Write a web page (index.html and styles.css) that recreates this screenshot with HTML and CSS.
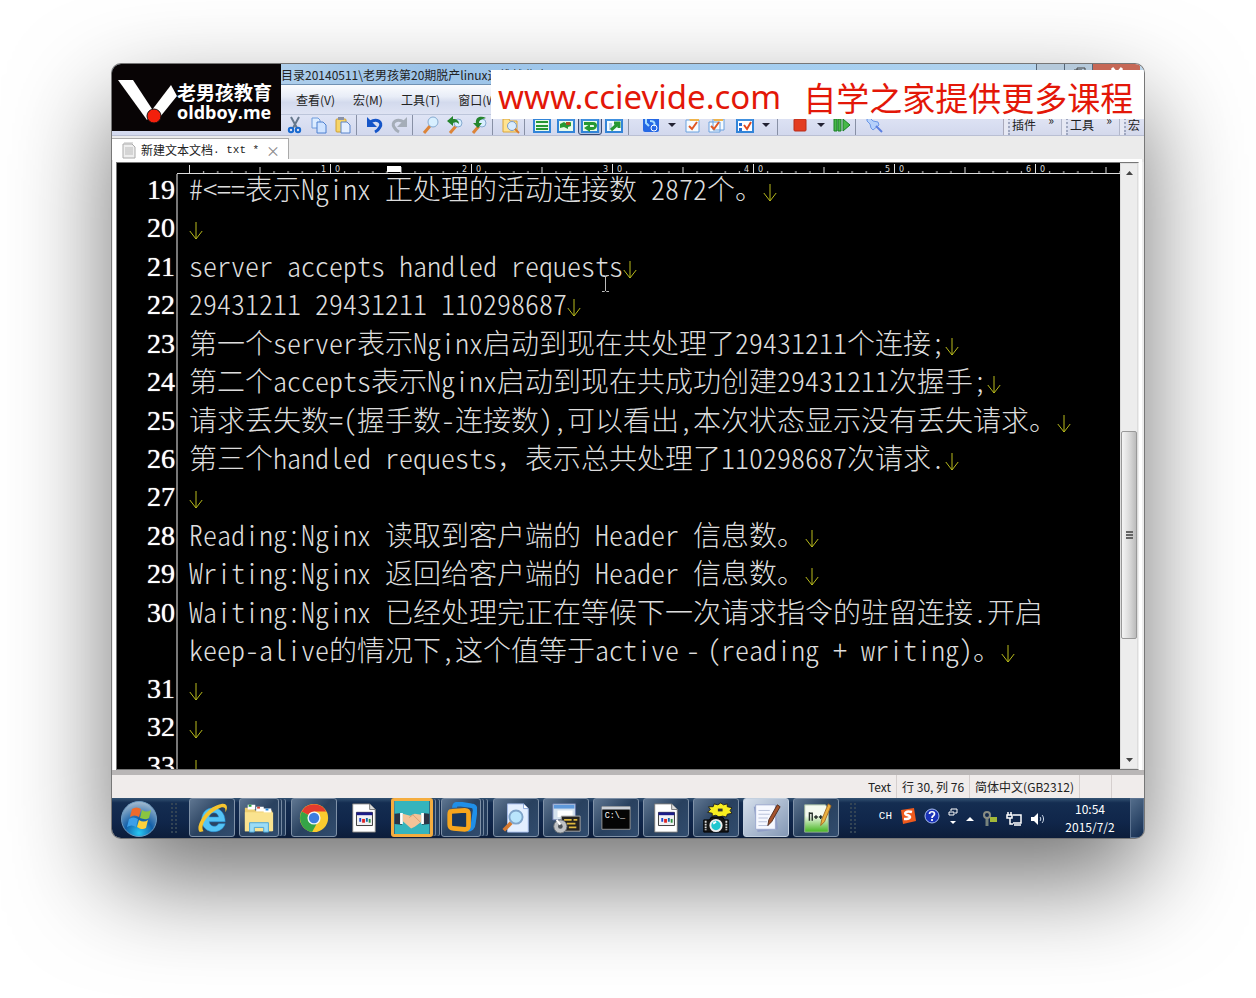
FILE: index.html
```html
<!DOCTYPE html>
<html lang="zh-CN">
<head>
<meta charset="utf-8">
<title>新建文本文档.txt</title>
<meta name="viewport" content="width=device-width, initial-scale=1">
<link rel="stylesheet" href="styles.css">
</head>
<body>
<main class="desktop">
  <header class="titlebar"><h1 class="title">目录20140511\老男孩第20期脱产linux运维就业班</h1>
    <div class="winbuttons"><button class="wb" aria-label="最小化"></button><button class="wb" aria-label="还原"><svg width="14" height="10" viewBox="0 0 14 10"><path d="M2 9V4h8v5M5 4V2h8v6" fill="none" stroke="#444"/></svg></button><button class="wb close" aria-label="关闭"><svg width="14" height="10" viewBox="0 0 14 10"><path d="M2 2l5 6 5-6" fill="none" stroke="#fff" stroke-width="3"/></svg></button></div>
  </header>
  <nav class="menubar"><button>查看(V)</button><button>宏(M)</button><button>工具(T)</button><button>窗口(W)</button></nav>
  <div class="toolbar">
    <div class="tools">
      <button class="tool" aria-label="剪切"><svg viewBox="0 0 18 18"><path d="M5 1l6 11M13 1L7 12" stroke="#66788c" stroke-width="2"/><circle cx="5" cy="14" r="2.2" fill="none" stroke="#1769cf" stroke-width="2"/><circle cx="12" cy="14" r="2.2" fill="none" stroke="#1769cf" stroke-width="2"/></svg></button>
      <button class="tool" aria-label="复制"><svg viewBox="0 0 18 18"><path d="M2 2h6l2 2v8H2z" fill="#dcecff" stroke="#6e9bdc"/><path d="M7 6h6l3 3v8H7z" fill="#cfe3ff" stroke="#4d80d0"/></svg></button>
      <button class="tool" aria-label="粘贴"><svg viewBox="0 0 18 18"><rect x="2" y="3" width="10" height="13" rx="1" fill="#f6d568" stroke="#d0a030"/><rect x="4" y="1" width="6" height="3" fill="#8b93a8"/><path d="M7 6h6l3 3v8H7z" fill="#e4efff" stroke="#5b85cc"/></svg></button>
      <i class="sep"></i>
      <button class="tool" aria-label="撤销"><svg viewBox="0 0 18 18"><path d="M4 6c7-4 13 0 10 5-1 2-3 4-5 5" fill="none" stroke="#1555c8" stroke-width="3"/><path d="M1 1v10h10z" fill="#1555c8"/></svg></button>
      <button class="tool" aria-label="重做"><svg viewBox="0 0 18 18"><path d="M14 6C7 2 1 6 4 11c1 2 3 4 5 5" fill="none" stroke="#a5adb8" stroke-width="3"/><path d="M17 1v10H7z" fill="#a5adb8"/></svg></button>
      <i class="sep"></i>
      <button class="tool" aria-label="查找"><svg viewBox="0 0 18 18"><path d="M8 10l-6 7" stroke="#dc8438" stroke-width="3"/><circle cx="11" cy="6" r="5" fill="#d8efff" stroke="#86aad0"/></svg></button>
      <button class="tool" aria-label="查找上一个"><svg viewBox="0 0 18 18"><path d="M10 10l-6 7" stroke="#dc8438" stroke-width="3"/><circle cx="12" cy="7" r="4" fill="#d8efff" stroke="#86aad0"/><path d="M1 5l6-5v3c4 0 6 2 6 5-2-2-4-2-6-1v3z" fill="#25852e"/></svg></button>
      <button class="tool" aria-label="查找下一个"><svg viewBox="0 0 18 18"><path d="M9 10l-6 7" stroke="#dc8438" stroke-width="3"/><circle cx="12" cy="7" r="4" fill="#d8efff" stroke="#86aad0"/><path d="M16 2C10-1 5 2 6 7H3l5 5 4-5H9c0-3 3-4 7-5z" fill="#25852e"/></svg></button>
      <i class="sep"></i>
      <button class="tool" aria-label="文件中查找"><svg viewBox="0 0 18 18"><path d="M1 3h6l1 2h7v11H1z" fill="#ffe391" stroke="#dba539"/><circle cx="10" cy="10" r="4.5" fill="#d8ecff" stroke="#7b9dc8"/><path d="M13 13l4 4" stroke="#d87b30" stroke-width="2"/></svg></button>
      <i class="sep tight"></i>
      <button class="tool" aria-label="不换行"><svg viewBox="0 0 18 18"><path d="M1 3h16v13H1z" fill="#e9fbe9" stroke="#3284d8" stroke-width="2"/><path d="M3 6h12M3 10h12M3 13h12" stroke="#269832" stroke-width="2"/></svg></button>
      <button class="tool" aria-label="按列换行"><svg viewBox="0 0 18 18"><path d="M1 3h16v13H1z" fill="#e9fbe9" stroke="#3284d8" stroke-width="2"/><path d="M1 2h16v3H1z" fill="#4090df"/><path d="M3 8l4-2 3 2 4-2v4l-3 1v2l-4-2-4 1z" fill="#269832"/><path d="M9 6h4v3H9z" fill="#a75024"/></svg></button>
      <button class="tool pressed" aria-label="按窗口换行"><svg viewBox="0 0 18 18"><path d="M1 3h16v13H1z" fill="#e9fbe9" stroke="#3284d8" stroke-width="2"/><path d="M1 2h16v3H1z" fill="#4090df"/><path d="M3 6h9c6 0 5 8-1 8H9v2l-6-4 6-4v3h3c2 0 1-2 0-2H3z" fill="#269832"/></svg></button>
      <button class="tool" aria-label="放大窗口"><svg viewBox="0 0 18 18"><path d="M1 3h16v13H1z" fill="#f2fbff" stroke="#3284d8" stroke-width="2"/><path d="M1 2h16v3H1z" fill="#4090df"/><path d="M4 7h3v7H4z" fill="#b9d3ea"/><path d="M6 14L14 7m-5 0h5v5" stroke="#269832" stroke-width="3" fill="none"/></svg></button>
      <i class="sep wide"></i>
      <button class="tool" aria-label="配置"><svg viewBox="0 0 18 18"><rect x="1" y="1" width="16" height="15" rx="2" fill="#2568e4"/><path d="M4 2v5l3 3M8 5c5 0 5 3 4 5" stroke="#a5dcff" stroke-width="2" fill="none"/><circle cx="12" cy="12" r="3" fill="none" stroke="#fff"/></svg></button>
      <button class="drop" aria-label="更多配置"></button>
      <button class="tool" aria-label="属性"><svg viewBox="0 0 18 18"><path d="M2 4h13v12H2z" fill="#f6fbff" stroke="#6ba1de"/><path d="M5 2l10-1v4H6z" fill="#efb44c"/><path d="M5 10l3 3 5-7" stroke="#e05724" stroke-width="2" fill="none"/></svg></button>
      <button class="tool" aria-label="全部属性"><svg viewBox="0 0 18 18"><path d="M5 3h11v11H5zM1 6h11v10H1z" fill="#f6fbff" stroke="#6ba1de"/><path d="M5 2l10-1v4H6z" fill="#efb44c"/><path d="M3 10l3 3 5-7" stroke="#e05724" stroke-width="2" fill="none"/></svg></button>
      <button class="tool options" aria-label="选项"><svg viewBox="0 0 18 18"><path d="M1 3h16v13H1z" fill="#fff" stroke="#3284d8" stroke-width="2"/><path d="M1 2h16v3H1z" fill="#4090df"/><path d="M3 7h3v3H3zM3 12h3v3H3z" fill="#246ed2"/><path d="M8 9l3 4 4-7" stroke="#e04a20" stroke-width="2" fill="none"/></svg></button>
      <button class="drop" aria-label="更多选项"></button>
      <i class="sep wide"></i>
      <button class="tool" aria-label="停止录制"><svg viewBox="0 0 18 18"><rect x="3" y="3" width="12" height="12" rx="1" fill="#e33d22" stroke="#b82c18"/></svg></button>
      <button class="drop" aria-label="更多录制"></button>
      <button class="tool" aria-label="运行宏"><svg viewBox="0 0 18 18"><path d="M1 3h3v12H1zM5 3h3v12H5zM10 3l7 6-7 6z" fill="#48b848" stroke="#188024"/></svg></button>
      <i class="sep"></i>
      <button class="tool" aria-label="固定"><svg viewBox="0 0 18 18"><path d="M2 3l3-1 3 3 5 1 1 3-6 5-2-2-1-4-3-3z" fill="#b5d0fa" stroke="#6b97e6"/><path d="M11 10l6 6" stroke="#5b7fe0" stroke-width="2"/></svg></button>
    </div>
    <div class="band"><button>插件</button><span>»</span></div>
    <div class="band"><button>工具</button><span>»</span></div>
    <div class="band last"><button>宏</button></div>
  </div>
  <div class="tabs"><div class="tab"><svg class="tabicon" viewBox="0 0 14 18" width="14" height="18"><path d="M1 3h9l3 3v11H1z" fill="#eee" stroke="#aaa"/><path d="M2 2h9M3 7h8M3 9h8M3 11h8M3 13h8" stroke="#bbb"/></svg><span>新建文本文档</span><span class="ext">. txt *</span><button aria-label="关闭标签">×</button></div></div>

  <section class="editor">
    <div class="sheet">
      <svg class="ruler" height="11" aria-hidden="true">
        <defs><pattern id="ticks" x="72" y="0" width="70.5" height="11" patternUnits="userSpaceOnUse"><path d="M.5 4v7M14.6 8v3M28.7 8v3M42.8 8v3M56.9 8v3" stroke="#ddd"/></pattern></defs>
        <rect x="72" width="100%" height="11" fill="url(#ticks)"/>
        <path d="M60 10.5h1200" stroke="#ddd"/>
        <path d="M72.5 2v9M213.5 1v10M354.5 1v10M495.5 1v10M636.5 1v10M777.5 1v10M918.5 1v10" stroke="#ddd"/>
        <path d="M270 3h14v6H270z" fill="#fff"/>
        <g class="marks"><text x="204" y="9">1</text><text x="218" y="9">0</text><text x="345" y="9">2</text><text x="359" y="9">0</text><text x="486" y="9">3</text><text x="500" y="9">0</text><text x="627" y="9">4</text><text x="641" y="9">0</text><text x="768" y="9">5</text><text x="782" y="9">0</text><text x="909" y="9">6</text><text x="923" y="9">0</text></g>
      </svg>
      <div class="view">
        <svg class="ibeam" width="9" height="17" viewBox="0 0 9 17"><path d="M1 .5h2.500l1 1 1-1H8M4.500 1v15M1 16.500h2.500l1-1 1 1H8" stroke="#bbb" fill="none"/></svg>
        <ol class="lines">
          <li><b>19</b><p>#&lt;==表示Nginx 正处理的活动连接数 2872个。<svg class="eol"><use href="#down"/></svg></p></li>
          <li><b>20</b><p><svg class="eol"><use href="#down"/></svg></p></li>
          <li><b>21</b><p>server accepts handled requests<svg class="eol"><use href="#down"/></svg></p></li>
          <li><b>22</b><p>29431211 29431211 110298687<svg class="eol"><use href="#down"/></svg></p></li>
          <li><b>23</b><p>第一个server表示Nginx启动到现在共处理了29431211个连接;<svg class="eol"><use href="#down"/></svg></p></li>
          <li><b>24</b><p>第二个accepts表示Nginx启动到现在共成功创建29431211次握手;<svg class="eol"><use href="#down"/></svg></p></li>
          <li><b>25</b><p>请求丢失数=(握手数-连接数),可以看出,本次状态显示没有丢失请求。<svg class="eol"><use href="#down"/></svg></p></li>
          <li><b>26</b><p>第三个handled requests<span class="full">，</span>表示总共处理了110298687次请求.<svg class="eol"><use href="#down"/></svg></p></li>
          <li><b>27</b><p><svg class="eol"><use href="#down"/></svg></p></li>
          <li><b>28</b><p>Reading:Nginx 读取到客户端的 Header 信息数。<svg class="eol"><use href="#down"/></svg></p></li>
          <li><b>29</b><p>Writing:Nginx 返回给客户端的 Header 信息数。<svg class="eol"><use href="#down"/></svg></p></li>
          <li><b>30</b><p>Waiting:Nginx 已经处理完正在等候下一次请求指令的驻留连接.开启<br>keep-alive的情况下,这个值等于active<span class="dash">-</span>(reading + writing)。<svg class="eol"><use href="#down"/></svg></p></li>
          <li><b>31</b><p><svg class="eol"><use href="#down"/></svg></p></li>
          <li><b>32</b><p><svg class="eol"><use href="#down"/></svg></p></li>
          <li><b>33</b><p><svg class="eol"><use href="#down"/></svg></p></li>
        </ol>
      </div>
    </div>
    <div class="scroll"><button aria-label="向上滚动"><svg width="7" height="4"><path d="M0 4l3.500-4L7 4z" fill="#444"/></svg></button><div class="track"><div class="thumb"><i></i><i></i><i></i></div></div><button aria-label="向下滚动"><svg width="7" height="4"><path d="M0 0h7L3.500 4z" fill="#444"/></svg></button></div>
  </section>

  <footer class="status"><span>Text</span><span>行 30, 列 76</span><span>简体中文(GB2312)</span><span class="cell"></span><span class="cell end"></span></footer>

  <div class="taskbar">
    <button class="start" aria-label="开始"><svg width="38" height="38" viewBox="0 0 38 38"><defs><radialGradient id="orb" cx=".5" cy=".9" r=".9"><stop offset="0" stop-color="#27c8f4"/><stop offset=".45" stop-color="#135fa8"/><stop offset="1" stop-color="#a8bdd0"/></radialGradient></defs><circle cx="19" cy="20" r="17.500" fill="url(#orb)" stroke="#6f9cc2"/><path d="M12 10c3-2 6-2 9 0l-2 8c-3-2-6-2-9 0z" fill="#ee6a2c"/><path d="M22 11c3 2 6 2 9 0l-2 8c-3 2-6 1-9 0z" fill="#8bc53f"/><path d="M9 20c3-2 6-2 9 0l-2 8c-3-2-6-2-9 0z" fill="#3c9fe8"/><path d="M19 21c3 2 6 2 9 0l-2 8c-3 2-6 1-9-1z" fill="#fbd13c"/></svg></button>
    <i class="grip"></i>
    <div class="apps">
      <button class="app" aria-label="Internet Explorer"><svg viewBox="0 0 34 34"><path d="M31 21H14c1 6 8 6 10 2h7C27 36 6 34 6 19 6 2 31 1 31 21zM14 16h10c-1-6-9-6-10 0z" fill="#55c4f5" stroke="#238fd6" stroke-width=".6"/><path d="M4 32C-2 26 12 4 27 2c7-1 7 5 4 9 1-5-1-6-5-5C15 10 3 24 8 31z" fill="#f6c42e"/></svg></button>
      <button class="app narrow stack" aria-label="资源管理器"><svg viewBox="0 0 34 34"><path d="M2 6h9l2 3h18v22H2z" fill="#eccd70"/><path d="M5 3h8v5H5zM14 5h8v5h-8zM22 7h8v5h-8z" fill="#fff"/><path d="M6 3h3v2H6z" fill="#28a33b"/><path d="M15 5h3v2h-3z" fill="#d43"/><path d="M24 7h3v2h-3z" fill="#28d"/><path d="M2 11h30v20H2z" fill="#fae38f"/><path d="M7 32V22h20v10h-5v-5H12v5z" fill="#9bdcf6" stroke="#4aa4d5"/></svg></button>
      <button class="app" aria-label="Chrome"><svg viewBox="0 0 34 34"><circle cx="17" cy="17" r="15" fill="#fbcb2e"/><path d="M17 17L4 10A15 15 0 0 1 30 10H17z" fill="#e33b2e"/><path d="M17 17L4 10A15 15 0 0 0 15 32l6-11z" fill="#35a447"/><circle cx="17" cy="17" r="7" fill="#f4f7fb"/><circle cx="17" cy="17" r="5.500" fill="#3b7de0"/></svg></button>
      <button class="app plain" aria-label="文档程序"><svg viewBox="0 0 34 34"><use href="#docapp"/></svg></button>
      <button class="app narrow hot stack" aria-label="远程协助"><svg viewBox="0 0 38 36"><path d="M0 0h38v36H0z" fill="#35b4bd"/><path d="M0 14l8-1v13l-8-1zM38 14l-8-1v13l8-1z" fill="#2c3446"/><path d="M6 13h3v12H6zM29 13h3v12h-3z" fill="#fff"/><path d="M9 14l8 2 5-2 7 1v8l-7 5-4 2-9-8z" fill="#f3c398"/><path d="M16 18l4-3 8 8" stroke="#d69b6e" fill="none"/></svg></button>
      <button class="app narrow stack" aria-label="VMware"><svg viewBox="0 0 34 34"><path d="M10 6c0-3 2-4 5-4l13 2c3 0 4 2 4 5l-2 14c0 4-3 6-6 6" fill="none" stroke="#1f8fe8" stroke-width="5"/><path d="M7 10l14-1c3 0 4 1 4 4v12c0 3-1 4-4 4l-12-1c-3 0-4-1-4-4V13c0-2 0-3 2-3z" fill="#19365c" stroke="#f7a51d" stroke-width="5"/></svg></button>
      <button class="app" aria-label="搜索"><svg viewBox="0 0 34 34"><path d="M8 2h17l5 5v25H8z" fill="#e3efff" stroke="#a3bae8"/><path d="M25 2v5h5" fill="#fff" stroke="#8aa6db"/><path d="M12 22l-8 8" stroke="#d67a30" stroke-width="4"/><circle cx="17" cy="16" r="7" fill="#b9e5fc" stroke="#7fa4c9" stroke-width="2"/></svg></button>
      <button class="app" aria-label="安装程序"><svg viewBox="0 0 34 34"><path d="M3 2h24v17H3z" fill="#d5e2ee" stroke="#67a"/><path d="M4 3h22v4H4z" fill="#5e99db"/><path d="M8 9h16v7H8z" fill="#fff"/><path d="M12 15h20v16H12z" fill="#25221e" stroke="#aaa"/><path d="M15 19h8m2 0h4M18 23h9M20 27h8" stroke="#e0b93e" stroke-width="2"/><circle cx="11" cy="26" r="7" fill="#bfc2c5" stroke="#6b7176"/><circle cx="11" cy="26" r="2.500" fill="#4d5358"/><path d="M7 19l4 5" stroke="#fff" stroke-width="2"/></svg></button>
      <button class="app" aria-label="命令提示符"><svg viewBox="0 0 34 34"><path d="M2 5h30v24H2z" fill="#050505" stroke="#999"/><path d="M2 5h30v3H2z" fill="#ccd1d8"/><text x="5" y="17" class="cmd">C:\_</text></svg></button>
      <button class="app" aria-label="文档程序 2"><svg viewBox="0 0 34 34"><use href="#docapp"/></svg></button>
      <button class="app" aria-label="截图工具"><svg viewBox="0 0 34 34"><path d="M9 5l5 0 1-3 4 1 3-2 3 2 4-1 0 3 5 1-2 3 2 3-5 1-1 3-4-1-4 1-3-2-4 1 0-3-5-1 3-3z" fill="#f8ee20" stroke="#222"/><path d="M19 7h5v3h-5z" fill="#333"/><path d="M4 19h6l2-3h12l2 3h4v13H4z" fill="#151515" stroke="#000"/><path d="M6 20v10M28 20v10" stroke="#ddd" stroke-width="2" stroke-dasharray="2 1"/><circle cx="17" cy="25" r="6" fill="#20c7cf" stroke="#eee" stroke-width="2"/><path d="M14 23l3-2" stroke="#fff" stroke-width="2"/></svg></button>
      <button class="app active" aria-label="EditPlus"><svg viewBox="0 0 34 34"><path d="M4 5l22-2 4 26-22 3z" fill="#8f9dc5"/><path d="M6 3h21v26H6z" fill="#f6f8ff" stroke="#9aa7cd"/><path d="M9 9h12M9 13h12M9 17h10M9 21h9M9 25h11" stroke="#b5bfd9"/><path d="M29 3l3 2-9 16-4 4 1-6z" fill="#a6532c" stroke="#502b1b"/></svg></button>
      <button class="app" aria-label="Notepad++"><svg viewBox="0 0 34 34"><defs><linearGradient id="green" x2="0" y2="1"><stop offset=".4" stop-color="#f4faef"/><stop offset="1" stop-color="#44b51e"/></linearGradient></defs><path d="M5 3h22l3 4v25H5z" fill="url(#green)" stroke="#9cb49a"/><path d="M10 11v9m0-8h3v8M15 16h4m-2-2v4M20 16h4m-2-2v4" stroke="#25302a" stroke-width="1.500" fill="none"/><path d="M30 2l3 2-7 17-4 4 1-6z" fill="#ecb13f" stroke="#a36c25"/></svg></button>
    </div>
    <i class="grip"></i>
    <div class="tray">
      <span class="ch">CH</span>
      <svg width="16" height="16" viewBox="0 0 16 16"><path d="M1 2l13-2 2 13-13 3z" fill="#ee5a1d"/><path d="M12 4C6 2 3 6 7 7s5 4-3 4" stroke="#fff" stroke-width="2.500" fill="none"/></svg>
      <svg width="16" height="16" viewBox="0 0 16 16"><circle cx="8" cy="8" r="7" fill="#1a32b8" stroke="#a9bef0"/><path d="M5.500 6c0-3 5-3 5 0 0 2-2.500 1.500-2.500 4M8 11v2" stroke="#fff" stroke-width="1.700" fill="none"/></svg>
      <svg width="10" height="18" viewBox="0 0 10 18"><path d="M1 5h5v3H1zM3 4V2h6v4H7" fill="none" stroke="#fff"/><path d="M2 14h6l-3 3z" fill="#fff"/></svg>
      <svg class="low" width="8" height="5"><path d="M0 5l4-4 4 4z" fill="#fff"/></svg>
      <svg class="low" width="16" height="16" viewBox="0 0 16 16"><path d="M5 6v9" stroke="#77837c" stroke-width="3"/><circle cx="5" cy="4" r="3" fill="none" stroke="#8a8d83" stroke-width="2"/><path d="M8 6h7v5H8z" fill="#a2b839"/></svg>
      <svg class="low" width="16" height="16" viewBox="0 0 16 16"><path d="M2 1v3M5 1v3M1 4h5v3H1zM4 7v6h3M7 4h8v8H7M8 14h7" fill="none" stroke="#fff" stroke-width="1.500"/></svg>
      <svg class="low" width="16" height="16" viewBox="0 0 16 16"><path d="M1 6h3l4-4v12l-4-4H1z" fill="#fff"/><path d="M10 6c1 1 1 3 0 4M12 4c2 2 2 6 0 8" stroke="#cfdcec" fill="none"/></svg>
    </div>
    <time class="clock" datetime="2015-07-02T10:54">10:54<br>2015/7/2</time>
    <button class="peek" aria-label="显示桌面"></button>
  </div>

  <div class="brand"><svg width="59" height="44" viewBox="2 0 59 44"><path d="M2 0h15l21 32-7 8z" fill="#fff"/><path d="M55 5l6 11-17 21-8-7z" fill="#fff"/><circle cx="38" cy="36" r="7" fill="#f3200c" stroke="#111"/></svg><div><strong>老男孩教育</strong><em>oldboy.me</em></div></div>
  <div class="banner"><span class="site">www.ccievide.com</span><span class="promo">自学之家提供更多课程</span></div>
</main>
<svg class="symbols" aria-hidden="true">
  <symbol id="down" viewBox="0 0 14 20"><path d="M7 1v17M.8 10L7 18l6.200-8" fill="none" stroke="#b9bb1c"/></symbol>
  <symbol id="docapp" viewBox="0 0 34 34"><path d="M5 2h18l6 6v24H5z" fill="#fff" stroke="#777"/><path d="M23 2v6h6" fill="#ddd" stroke="#777"/><path d="M9 11h17v14H9z" fill="#f1f1f4" stroke="#333"/><path d="M9 11h17v3H9z" fill="#1b1b88"/><path d="M12 17h2v4h-2z" fill="#1b45d1"/><path d="M15 18h3v4h-3z" fill="#d22"/><path d="M19 17h2v4h-2z" fill="#16a"/><path d="M22 18h2v4h-2z" fill="#298f39"/></symbol>
</svg>
</body>
</html>
```
FILE: styles.css
```css
* { box-sizing: border-box; }
body { margin: 0; padding: 64px 112px 160px; background: #fff; font: 12px/16px "Noto Sans CJK SC", sans-serif; color: #222; }
button { font: inherit; color: inherit; border: 0; padding: 0; background: none; }
i { display: block; flex: none; }
.symbols { position: absolute; width: 0; height: 0; }

.desktop { position: relative; display: flex; flex-direction: column; border-radius: 9px; overflow: hidden; background: #ededed; box-shadow: 0 0 0 1px #777, 0 42px 100px rgba(0, 0, 0, .56); }

.titlebar { display: flex; height: 21px; padding-left: 169px; background: linear-gradient(90deg, #c4dcef, #9cc3e8 30%, #a6cff0 70%, #bcd5e9); border-bottom: 1px solid #7191b2; }
.title { flex: 1; margin: 0; font-size: 12px; font-weight: 400; line-height: 21px; white-space: nowrap; overflow: hidden; }
.winbuttons { display: flex; align-self: flex-start; margin-right: 4px; }
.wb { width: 28px; height: 14px; border-left: 1px solid #567; background: #b5c9da; }
.wb svg { display: block; margin: 2px auto; }
.wb.close { width: 48px; background: #c66856; }
.menubar { display: flex; gap: 18px; height: 30px; padding-left: 184px; background: linear-gradient(#fbfcfe, #e8edf7 40%, #d3daed 60%, #dee3f3); border-bottom: 1px solid #bcc5da; }

.toolbar { display: flex; height: 21px; background: #e6e8f3; border-bottom: 1px solid #b9bfd3; }
.tools { flex: 1; display: flex; padding-left: 171px; background: linear-gradient(#dfe4f5, #d2d8ed); border-right: 1px solid #aab; }
.tool { width: 24px; flex: none; display: grid; place-items: center; }
.tool svg { width: 18px; height: 18px; }
.tool.pressed { border: 1px solid #3b4e76; border-radius: 3px; background: #b4c4e4; }
.tool.options { margin-left: 4px; }
.sep { width: 7px; border-left: 1px solid #8890a5; margin-left: 1px; }
.sep.tight { width: 6px; }
.sep.wide { width: 11px; margin-left: 2px; }
.drop { width: 18px; display: grid; place-items: center; }
.drop::before { content: ""; border: 4px solid transparent; border-top-color: #223; border-bottom: 0; }
.band { display: flex; justify-content: space-between; width: 54px; margin-left: 4px; padding: 0 7px 0 2px; border-left: 2px dotted #a0a8c0; border-right: 1px solid #b2b7ca; background: linear-gradient(#e2e6f5, #d4d9ec); }
.band span { line-height: 10px; }
.band.last { width: 20px; padding: 0 0 0 2px; border-right: 0; }

.tabs { height: 26px; padding-top: 2px; background: #ebebeb; border-bottom: 3px solid #e6e6e6; }
.tab { display: flex; align-items: center; width: 177px; height: 22px; padding: 0 8px 0 10px; background: #fff; border: 1px solid #aaa; border-width: 1px 1px 0 0; }
.tabicon { margin-right: 5px; }
.ext { font: 11px/16px "Liberation Mono", monospace; margin-right: auto; }
.tab button { color: #888; font-size: 14px; }

.editor { display: flex; margin: 0 5px 0 4px; height: 608px; border: 1px solid #777; border-right-color: #eee; background: #eee; box-shadow: 0 0 0 3px #fff; }
.sheet { flex: 1; min-width: 0; display: flex; flex-direction: column; background: #000; }
.ruler { display: block; width: 100%; flex: none; }
.marks { font: 8px "DejaVu Sans", sans-serif; fill: #ddd; }
.view { position: relative; flex: 1; overflow: hidden; }
.lines { display: flex; flex-direction: column; justify-content: space-between; height: 614px; margin: -3px 0 0; padding: 0; list-style: none; background: linear-gradient(90deg, transparent 59px, #777 59px, #777 61px, transparent 61px); }
.lines li { display: flex; color: #ddd; }
.lines b { width: 61px; flex: none; padding-right: 3px; text-align: right; color: #fff; font: 400 28px/38px "Liberation Serif", serif; text-shadow: 0 0 1px #fff; }
.lines p { margin: -2px 0 2px 11px; font-size: 28px; font-weight: 300; line-height: 38px; font-feature-settings: "hwid"; white-space: pre; }
.full { font-feature-settings: normal; }
.dash { display: inline-block; width: 28px; text-align: center; }
.eol { width: 14px; height: 20px; vertical-align: -3px; }
.ibeam { position: absolute; left: 484px; top: 101px; }
.scroll { width: 18px; flex: none; display: flex; flex-direction: column; background: #ededed; border: 1px solid #ddd; }
.scroll > button { height: 17px; display: grid; place-items: center; }
.track { flex: 1; display: flex; flex-direction: column; }
.track::before { content: ""; flex: 252; }
.track::after { content: ""; flex: 113; }
.thumb { flex: 207; display: flex; flex-direction: column; justify-content: center; align-items: center; gap: 1px; border: 1px solid #999; border-radius: 2px; background: linear-gradient(90deg, #f5f5f5, #dcdcdc 50%, #bbb); }
.thumb i { width: 7px; height: 2px; background: #666; }

.status { position: relative; display: flex; justify-content: flex-end; height: 28px; border-top: 5px solid #b9b6b6; background: #f0eceb; line-height: 23px; }
.status span { padding: 0 5px; border-right: 1px solid #d5cfce; }
.status .cell { width: 32px; }
.status .end { border: 0; }

.taskbar { display: flex; height: 40px; background: linear-gradient(#345373, #142d51 12%, #10264a 60%, #0c1d3a); color: #fff; }
.start { width: 38px; margin-left: 8px; }
.start svg { display: block; }
.grip { width: 9px; margin: 4px 10px; background: radial-gradient(circle, #345 1px, transparent 1px) 0 0 / 4px 4px; }
.start + .grip { margin-left: 12px; }
.apps { display: flex; gap: 4px; }
.app { position: relative; width: 46px; height: 39px; flex: none; display: grid; place-items: center; border: 1px solid #7f91a7; border-radius: 3px; background: linear-gradient(135deg, #5f7691, #29415f 50%, #314c6e); }
.app svg { width: 32px; height: 32px; }
.app.plain { border-color: transparent; background: none; }
.app.narrow { width: 40px; }
.app.stack { margin-right: 8px; box-shadow: 3px 0 0 -1px #243c5c, 4px 0 0 -1px #7488a0, 7px 0 0 -1px #243c5c, 8px 0 0 -1px #7488a0; }
.app.hot { width: 42px; border: 3px solid #f5ad3f; margin-right: 4px; }
.app.hot svg { width: 36px; height: 33px; }
.app.active { background: linear-gradient(135deg, #d5dfec, #8498b5); border-color: #c3d0df; }
.cmd { font: 9px "Liberation Mono", monospace; fill: #fff; }
.tray { display: flex; gap: 8px; height: 36px; align-items: center; margin-left: auto; margin-right: 17px; }
.low { margin-top: 5px; }
.ch { font: 11px/16px "Liberation Mono", monospace; }
.clock { width: 54px; padding-top: 2px; text-align: center; line-height: 18px; }
.peek { width: 14px; margin-left: 13px; border: 1px solid #5c7391; background: linear-gradient(135deg, #536d8b, #142d51); }

.brand { position: absolute; left: 0; top: 0; width: 169px; height: 67px; display: flex; padding: 16px 0 0 6px; background: #080405; color: #fff; }
.brand strong, .brand em { display: block; font-style: normal; font-weight: 700; white-space: nowrap; }
.brand strong { margin-top: 2px; font-size: 19px; line-height: 20px; }
.brand em { font: 700 18px/20px "Open Sans", sans-serif; }
.banner { position: absolute; left: 379px; right: 0; top: 6px; height: 49px; display: flex; align-items: center; gap: 22px; padding: 4px 0 0 7px; background: #fff; color: #e31708; white-space: nowrap; overflow: hidden; }
.site { font: 33px/48px "Noto Sans", sans-serif; }
.promo { font-size: 33px; line-height: 48px; }
```
